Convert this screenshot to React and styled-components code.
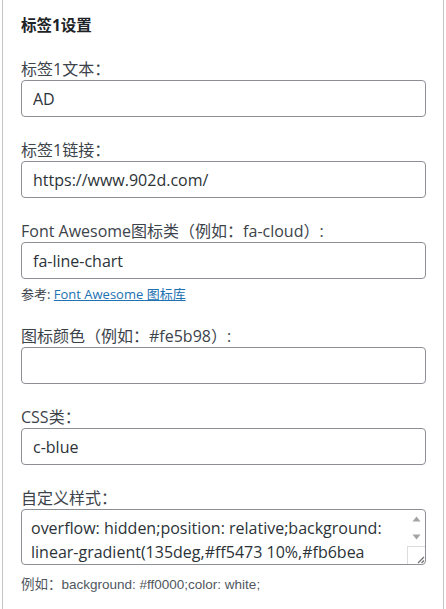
import React from "react";
import styled, { createGlobalStyle } from "styled-components";

const Global = createGlobalStyle`
  html, body { margin: 0; padding: 0; background: #fff; }
  body { font-family: "Open Sans", "Noto Sans CJK SC", sans-serif; }
  * { box-sizing: border-box; }
`;

const Panel = styled.div`
  margin-left: 2px;
  width: 442px;
  min-height: 609px;
  border-left: 1px solid #c3c4c7;
  border-right: 1px solid #c3c4c7;
  padding: 15px 17px 0 18px;
  display: flex;
  flex-direction: column;
`;

const Heading = styled.h3`
  margin: 0 0 24px;
  font-size: 15.5px;
  line-height: 20px;
  font-weight: 700;
  color: #1d2327;
`;

const Field = styled.div`
  display: flex;
  flex-direction: column;
  margin-bottom: ${(p) => p.$gap ?? 23}px;
`;

const Label = styled.label`
  display: block;
  font-size: 16px;
  line-height: 20px;
  color: #3c434a;
  margin-bottom: 1px;
  white-space: nowrap;
`;

const Input = styled.input`
  display: block;
  width: 100%;
  height: 37px;
  margin: 0;
  padding: 0 11px;
  border: 1px solid #8c8f94;
  border-radius: 4px;
  background: #fff;
  font-family: "Open Sans", "Noto Sans CJK SC", sans-serif;
  font-size: 16px;
  color: #2c3338;
  outline: none;
`;

const Hint = styled.p`
  margin: ${(p) => p.$top}px 0 0;
  font-family: ${(p) =>
    p.$plain
      ? `"Liberation Sans", "Noto Sans CJK SC", sans-serif`
      : `"Open Sans", "Noto Sans CJK SC", sans-serif`};
  font-size: ${(p) => (p.$plain ? 13.5 : 13)}px;
  line-height: 18px;
  color: ${(p) => (p.$plain ? "#50575e" : "#3c434a")};
`;

const Link = styled.a`
  color: #2271b1;
  text-decoration: underline;
`;

const AreaWrap = styled.div`
  position: relative;
  width: 100%;
  height: 56px;
`;

const TextArea = styled.textarea`
  display: block;
  width: 100%;
  height: 100%;
  margin: 0;
  padding: 6px 19px 0 9px;
  border: 1px solid #8c8f94;
  border-radius: 4px;
  background: #fff;
  font-family: "Open Sans", "Noto Sans CJK SC", sans-serif;
  font-size: 16px;
  line-height: 24px;
  color: #2c3338;
  resize: none;
  overflow: hidden;
  outline: none;
`;

const ScrollBar = styled.div`
  position: absolute;
  top: 1px;
  right: 1px;
  bottom: 1px;
  width: 18px;
  display: flex;
  flex-direction: column;
  align-items: center;
  border-radius: 0 3px 3px 0;
`;

const ArrowBtn = styled.div`
  height: 18px;
  width: 100%;
  display: flex;
  align-items: center;
  justify-content: center;
`;

const Corner = styled.div`
  margin-top: auto;
  width: 100%;
  height: 18px;
  border-top: 1px solid #dcdcde;
  border-left: 1px solid #dcdcde;
  display: flex;
  align-items: flex-end;
  justify-content: flex-end;
`;

const fields = [
  { label: "标签1文本：", value: "AD" },
  { label: "标签1链接：", value: "https://www.902d.com/" },
];

export default function App() {
  return (
    <>
      <Global />
      <Panel>
        <Heading>标签1设置</Heading>
        {fields.map((f) => (
          <Field key={f.label}>
            <Label>{f.label}</Label>
            <Input defaultValue={f.value} />
          </Field>
        ))}
        <Field>
          <Label>Font Awesome图标类（例如：fa-cloud）:</Label>
          <Input defaultValue="fa-line-chart" />
          <Hint $top={6}>
            参考: <Link href="#">Font Awesome 图标库</Link>
          </Hint>
        </Field>
        <Field>
          <Label>图标颜色（例如：#fe5b98）:</Label>
          <Input defaultValue="" />
        </Field>
        <Field>
          <Label>CSS类：</Label>
          <Input defaultValue="c-blue" />
        </Field>
        <Field $gap={0}>
          <Label>自定义样式：</Label>
          <AreaWrap>
            <TextArea defaultValue="overflow: hidden;position: relative;background: linear-gradient(135deg,#ff5473 10%,#fb6bea 100%);color: #fff;" />
            <ScrollBar>
              <ArrowBtn>
                <svg width="9" height="6" viewBox="0 0 9 6">
                  <path d="M4.5 0.5 L8.5 5.5 L0.5 5.5 Z" fill="#a3a3a3" />
                </svg>
              </ArrowBtn>
              <ArrowBtn>
                <svg width="9" height="6" viewBox="0 0 9 6">
                  <path d="M0.5 0.5 L8.5 0.5 L4.5 5.5 Z" fill="#a3a3a3" />
                </svg>
              </ArrowBtn>
              <Corner>
                <svg width="9" height="9" viewBox="0 0 9 9">
                  <path d="M8 2 L2 8 M8 5.5 L5.5 8" stroke="#6e6e6e" strokeWidth="1.2" />
                </svg>
              </Corner>
            </ScrollBar>
          </AreaWrap>
          <Hint $top={11} $plain>
            例如：background: #ff0000;color: white;
          </Hint>
        </Field>
      </Panel>
    </>
  );
}
